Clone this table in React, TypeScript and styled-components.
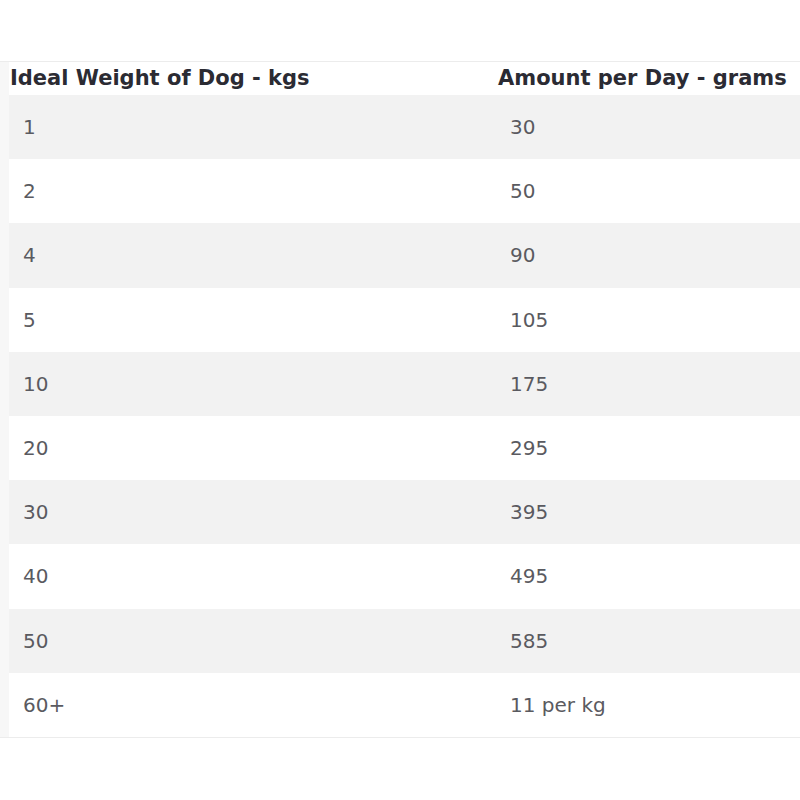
import React from "react";
import styled, { createGlobalStyle } from "styled-components";

const GlobalStyle = createGlobalStyle`
  html, body {
    margin: 0;
    padding: 0;
    background: #ffffff;
  }
  body {
    font-family: "DejaVu Sans", "Open Sans", Arial, sans-serif;
  }
`;

const Page = styled.div`
  width: 800px;
  height: 800px;
  overflow: hidden;
  padding-top: 61px;
  box-sizing: border-box;
`;

const Frame = styled.div`
  background: #f7f7f7;
  border-top: 1px solid #ececec;
  border-bottom: 1px solid #ececec;
  padding-left: 9px;
`;

const Table = styled.table`
  width: 820px;
  border-collapse: collapse;
  table-layout: fixed;
  background: #ffffff;
`;

const HeadCell = styled.th<{ $width?: number }>`
  width: ${(p) => (p.$width ? `${p.$width}px` : "auto")};
  height: 33px;
  padding: 0 0 0 1px;
  text-align: left;
  vertical-align: middle;
  font-family: "DejaVu Sans", "Open Sans", sans-serif;
  font-weight: 700;
  font-size: 21px;
  line-height: 33px;
  color: #2b2b33;
  white-space: nowrap;
`;

const Row = styled.tr<{ $shaded: boolean }>`
  background: ${(p) => (p.$shaded ? "#f2f2f2" : "#ffffff")};
`;

const Cell = styled.td`
  height: 64.2px;
  padding: 0 0 0 14px;
  vertical-align: middle;
  font-family: "DejaVu Sans", "Open Sans", sans-serif;
  font-size: 20px;
  color: #5a5a60;
  white-space: nowrap;

  & + & {
    padding-left: 13px;
  }
`;

const rows: [string, string][] = [
  ["1", "30"],
  ["2", "50"],
  ["4", "90"],
  ["5", "105"],
  ["10", "175"],
  ["20", "295"],
  ["30", "395"],
  ["40", "495"],
  ["50", "585"],
  ["60+", "11 per kg"],
];

export default function App() {
  return (
    <>
      <GlobalStyle />
      <Page>
        <Frame>
          <Table>
            <thead>
              <tr>
                <HeadCell $width={487}>Ideal Weight of Dog - kgs</HeadCell>
                <HeadCell>Amount per Day - grams</HeadCell>
              </tr>
            </thead>
            <tbody>
              {rows.map(([weight, amount], i) => (
                <Row key={weight} $shaded={i % 2 === 0}>
                  <Cell>{weight}</Cell>
                  <Cell>{amount}</Cell>
                </Row>
              ))}
            </tbody>
          </Table>
        </Frame>
      </Page>
    </>
  );
}
